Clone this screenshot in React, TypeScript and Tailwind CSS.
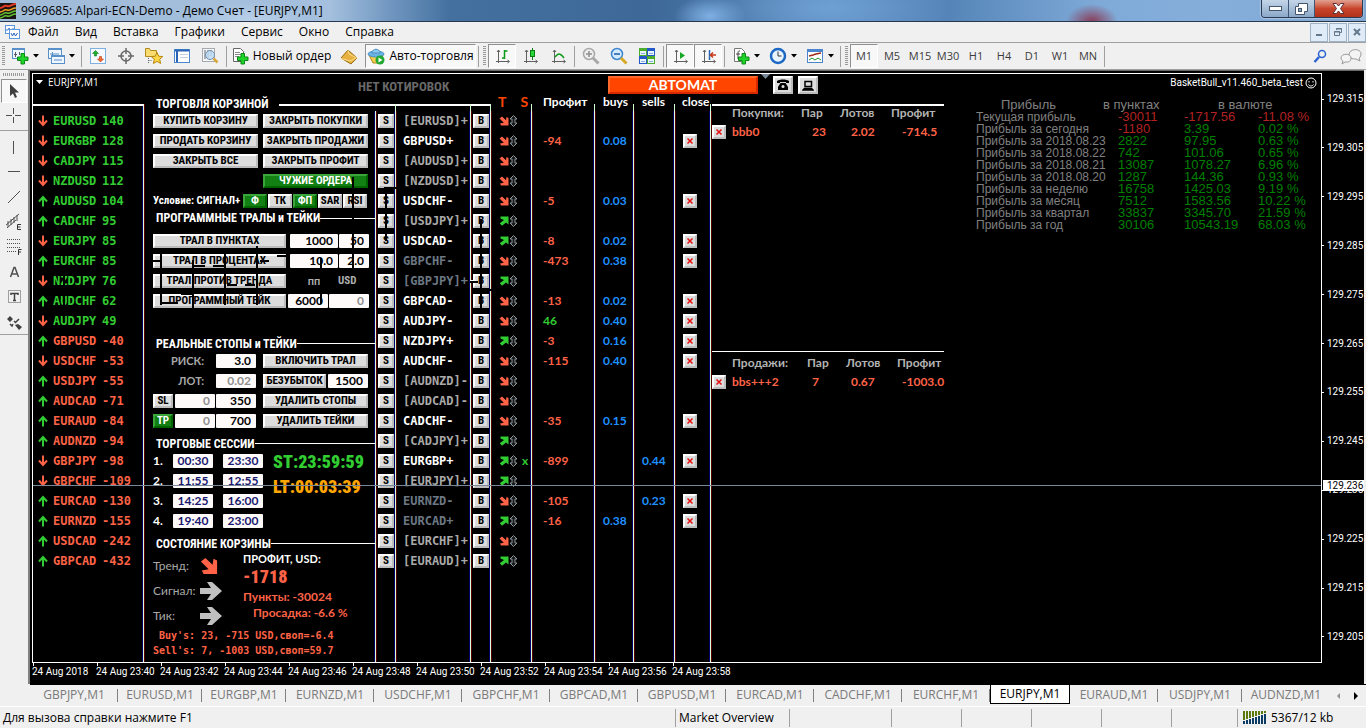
import React from "react";
import clsx from "clsx";

const UI = "font-['Open_Sans','Noto_Sans',sans-serif]";
const AXIS = "font-['Roboto','Open_Sans',sans-serif]";
const LABEL = "font-['Lato','Open_Sans',sans-serif]";
const MONO = "font-['DejaVu_Sans_Mono','Liberation_Mono',monospace]";
const NARROW = "font-['Roboto_Condensed','Liberation_Sans_Narrow','DejaVu_Sans_Condensed',sans-serif]";

// 1px light rule with coloured fringes on both sides
const RULE = "border-r border-[#d8ffd8] shadow-[inset_-1px_0_#00006c,1px_0_#5c0000]";

type Strength = { pair: string; value: number; up: boolean };

const strengths: Strength[] = [
  { pair: "EURUSD", value: 140, up: false },
  { pair: "EURGBP", value: 128, up: false },
  { pair: "CADJPY", value: 115, up: false },
  { pair: "NZDUSD", value: 112, up: false },
  { pair: "AUDUSD", value: 104, up: true },
  { pair: "CADCHF", value: 95, up: true },
  { pair: "EURJPY", value: 85, up: false },
  { pair: "EURCHF", value: 85, up: true },
  { pair: "NZDJPY", value: 76, up: false },
  { pair: "AUDCHF", value: 62, up: true },
  { pair: "AUDJPY", value: 49, up: false },
  { pair: "GBPUSD", value: -40, up: true },
  { pair: "USDCHF", value: -53, up: false },
  { pair: "USDJPY", value: -55, up: true },
  { pair: "AUDCAD", value: -71, up: true },
  { pair: "EURAUD", value: -84, up: true },
  { pair: "AUDNZD", value: -94, up: true },
  { pair: "GBPJPY", value: -98, up: false },
  { pair: "GBPCHF", value: -109, up: false },
  { pair: "EURCAD", value: -130, up: true },
  { pair: "EURNZD", value: -155, up: true },
  { pair: "USDCAD", value: -242, up: true },
  { pair: "GBPCAD", value: -432, up: true },
];

type Position = {
  name: string;
  tone?: "open" | "dim";
  up?: boolean;
  profit?: string;
  buys?: string;
  sells?: string;
  mark?: boolean;
};

const positions: Position[] = [
  { name: "[EURUSD]+" },
  { name: "GBPUSD+", tone: "open", profit: "-94", buys: "0.08" },
  { name: "[AUDUSD]+" },
  { name: "[NZDUSD]+" },
  { name: "USDCHF-", tone: "open", profit: "-5", buys: "0.03" },
  { name: "[USDJPY]+", up: true },
  { name: "USDCAD-", tone: "open", up: true, profit: "-8", buys: "0.02" },
  { name: "GBPCHF-", tone: "dim", profit: "-473", buys: "0.38" },
  { name: "[GBPJPY]+", tone: "dim", up: true },
  { name: "GBPCAD-", tone: "open", profit: "-13", buys: "0.02" },
  { name: "AUDJPY-", tone: "open", profit: "46", buys: "0.40" },
  { name: "NZDJPY+", tone: "open", up: true, profit: "-3", buys: "0.16" },
  { name: "AUDCHF-", tone: "open", profit: "-115", buys: "0.40" },
  { name: "[AUDNZD]-" },
  { name: "[AUDCAD]-" },
  { name: "CADCHF-", tone: "open", profit: "-35", buys: "0.15" },
  { name: "[CADJPY]+", up: true },
  { name: "EURGBP+", tone: "open", up: true, profit: "-899", sells: "0.44", mark: true },
  { name: "[EURJPY]+", up: true },
  { name: "EURNZD-", tone: "dim", profit: "-105", sells: "0.23" },
  { name: "EURCAD+", tone: "dim", up: true, profit: "-16", buys: "0.38" },
  { name: "[EURCHF]+" },
  { name: "[EURAUD]+", up: true },
];

const history = [
  ["Текущая прибыль", "-30011", "-1717.56", "-11.08 %"],
  ["Прибыль за сегодня", "-1180", "3.39", "0.02 %"],
  ["Прибыль за 2018.08.23", "2822", "97.95", "0.63 %"],
  ["Прибыль за 2018.08.22", "742", "101.06", "0.65 %"],
  ["Прибыль за 2018.08.21", "13087", "1078.27", "6.96 %"],
  ["Прибыль за 2018.08.20", "1287", "144.36", "0.93 %"],
  ["Прибыль за неделю", "16758", "1425.03", "9.19 %"],
  ["Прибыль за месяц", "7512", "1583.56", "10.22 %"],
  ["Прибыль за квартал", "33837", "3345.70", "21.59 %"],
  ["Прибыль за год", "30106", "10543.19", "68.03 %"],
];

const prices = ["129.315", "129.305", "129.295", "129.285", "129.275", "129.265", "129.255", "129.245", "129.235", "129.225", "129.215", "129.205"];

const times = ["24 Aug 2018", "24 Aug 23:40", "24 Aug 23:42", "24 Aug 23:44", "24 Aug 23:46", "24 Aug 23:48", "24 Aug 23:50", "24 Aug 23:52", "24 Aug 23:54", "24 Aug 23:56", "24 Aug 23:58"];

const tabs = [
  { name: "GBPJPY,M1", width: "w-[88px]" },
  { name: "EURUSD,M1", width: "w-[84px]" },
  { name: "EURGBP,M1", width: "w-[84px]" },
  { name: "EURNZD,M1", width: "w-[88px]" },
  { name: "USDCHF,M1", width: "w-[88px]" },
  { name: "GBPCHF,M1", width: "w-[88px]" },
  { name: "GBPCAD,M1", width: "w-[88px]" },
  { name: "GBPUSD,M1", width: "w-[88px]" },
  { name: "EURCAD,M1", width: "w-[88px]" },
  { name: "CADCHF,M1", width: "w-[88px]" },
  { name: "EURCHF,M1", width: "w-[88px]" },
  { name: "EURJPY,M1", width: "w-[80px]", active: true },
  { name: "EURAUD,M1", width: "w-[88px]" },
  { name: "USDJPY,M1", width: "w-[84px]" },
  { name: "AUDNZD,M1", width: "w-[88px]", last: true },
];

/* ---------- title, menu and toolbar ---------- */

const Icon = ({ children, w = 18, h = 18 }: { children: React.ReactNode; w?: number; h?: number }) => (
  <svg width={w} height={h} viewBox={`0 0 ${w} ${h}`} className="shrink-0" aria-hidden="true">
    {children}
  </svg>
);

const Plus = ({ x, y }: { x: number; y: number }) => (
  <path
    transform={`translate(${x} ${y})`}
    d="M4 .5h3.500v3.500h3.500v3.500h-3.500v3.500h-3.500v-3.500h-3.500v-3.500h3.500z"
    fill="#1fd32b"
    stroke="#0a8a14"
  />
);

const Axes = ({ children }: { children?: React.ReactNode }) => (
  <Icon>
    <path d="M5.500 3v13M3 14.500h13M4 5l1.500-2L7 5M14.500 13l2 1.500-2 1.500" fill="none" stroke="#606060" />
    {children}
  </Icon>
);

const Caret = () => (
  <Icon w={6} h={4}>
    <path d="M0 0h6L3 3.500z" fill="#000" />
  </Icon>
);

const Grip = () => <span className="mx-0.5 h-5 w-[3px] bg-[repeating-linear-gradient(#9a9a9a_0_1px,#efefef_1px_2px)]" />;
const Divider = () => <span className="mx-[2px] h-[21px] w-px bg-[#a0a0a0]" />;

const Tool = ({
  label,
  pressed,
  children,
  className = "w-7",
}: {
  label: string;
  pressed?: boolean;
  children: React.ReactNode;
  className?: string;
}) => (
  <button
    type="button"
    aria-label={label}
    className={clsx(
      "flex h-6 shrink-0 items-center justify-center gap-1 border",
      pressed ? "border-b-white border-l-[#909090] border-r-white border-t-[#909090] bg-[#f8f8f8]" : "border-transparent",
      className
    )}
  >
    {children}
  </button>
);

const TitleBar = () => (
  <header className="flex h-[22px] items-start border-b border-[#27384f] bg-[radial-gradient(60px_18px_at_250px_20px,#b9cfe8,transparent),radial-gradient(36px_20px_at_710px_16px,#7fb0e4,transparent),radial-gradient(120px_40px_at_830px_8px,#6fa0d4,transparent),radial-gradient(26px_18px_at_1092px_22px,#8a3a55,transparent),linear-gradient(90deg,#9fbbd8_0,#a4c0de_330px,#7197c0_390px,#44709f_450px,#3d6898_650px,#5a89bb_830px,#5585b8_950px,#7faad8_1100px,#86aedb_1220px,#7fa6d0_100%)]">
    <Icon w={16} h={21}>
      <rect y="3" width="16" height="16" fill="#1a1414" />
      <path d="M0 8c4 0 3-3 7-2s4-2 9-2" fill="none" stroke="#e03a22" strokeWidth="2" />
      <path d="M0 12c4 0 3-3 7-2s4-2 9-2" fill="none" stroke="#f0a020" strokeWidth="1.500" />
      <path d="M0 15c4 0 3-3 7-2s4-2 9-2M0 18c4 0 3-3 7-2s4-2 9-2" fill="none" stroke="#5fc030" strokeWidth="1.500" />
    </Icon>
    <h1 className="pl-[5px] text-xs leading-[22px] text-black">9969685: Alpari-ECN-Demo - Демо Счет - [EURJPY,M1]</h1>
    <div className="ml-auto mr-[3px] flex h-[18px] overflow-hidden rounded-b border border-t-0 border-[#2a3c55] shadow-[0_0_2px_#fff]">
      <button type="button" aria-label="Свернуть" className="flex w-[27px] items-center justify-center border-r border-[#3f5878] bg-linear-to-b from-[#c4d5e8] to-[#8ba8c8]">
        <Icon w={13} h={6}>
          <rect x=".5" y=".5" width="12" height="4" fill="#fff" stroke="#44546a" />
        </Icon>
      </button>
      <button type="button" aria-label="Восстановить" className="flex w-[26px] items-center justify-center border-r border-[#3f5878] bg-linear-to-b from-[#c4d5e8] to-[#8ba8c8]">
        <Icon w={13} h={12}>
          <path d="M3.500.5h9v8h-3v3h-9v-8h3z" fill="#fff" stroke="#44546a" />
          <rect x="3.500" y="5.500" width="3" height="3" fill="#8ba8c8" stroke="#44546a" />
        </Icon>
      </button>
      <button type="button" aria-label="Закрыть" className="flex w-[47px] items-center justify-center bg-linear-to-b from-[#e0a090] via-[#c8452c] to-[#b03018]">
        <Icon w={13} h={11}>
          <path d="M1 .5h3.500l2 2.500 2-2.500H12L8.500 5.500 12 10.500H8.500l-2-2.500-2 2.500H1l3.500-5z" fill="#fff" stroke="#5a3038" />
        </Icon>
      </button>
    </div>
  </header>
);

const MenuBar = () => (
  <nav className="flex h-[21px] items-center border-b border-[#a0a0a0] pl-[5px]">
    <Icon w={15} h={15}>
      <rect x=".5" y=".5" width="9" height="8" fill="#fff" stroke="#5a96dc" />
      <path d="M1 5h2l1-2 2 3 1-2h2" fill="none" stroke="#3a7ad0" />
      <rect x="4.500" y="4.500" width="10" height="9" fill="#fff" stroke="#5a96dc" />
      <path d="M6 8l1.500 3L9 8l1.500 3 2-3" fill="none" stroke="#2a62c0" />
    </Icon>
    <ul className="flex gap-4 pl-2 text-xs">
      {["Файл", "Вид", "Вставка", "Графики", "Сервис", "Окно", "Справка"].map((item) => (
        <li key={item}>
          <button type="button">{item}</button>
        </li>
      ))}
    </ul>
    <div className="ml-auto flex gap-px">
      <button type="button" aria-label="Свернуть график" className="flex h-[19px] w-[18px] items-center justify-center border border-[#9fb4c8] bg-[#dfebf7]">
        <Icon w={10} h={10}>
          <path d="M2 8h6" stroke="#64788c" strokeWidth="2" />
        </Icon>
      </button>
      <button type="button" aria-label="Восстановить график" className="flex h-[19px] w-[18px] items-center justify-center border border-[#9fb4c8] bg-[#dfebf7]">
        <Icon w={10} h={10}>
          <path d="M3.500 3V1.500h5v4H7M1.500 4.500h5v4h-5zM1 5h6M3 2h6" fill="none" stroke="#64788c" />
        </Icon>
      </button>
      <button type="button" aria-label="Закрыть график" className="flex h-[19px] w-[18px] items-center justify-center border border-[#9fb4c8] bg-[#dfebf7]">
        <Icon w={10} h={10}>
          <path d="M2 2l6 6M8 2L2 8" stroke="#64788c" strokeWidth="2" />
        </Icon>
      </button>
    </div>
  </nav>
);

const Toolbar = () => (
  <div className="flex h-[27px] items-center border-b border-[#a0a0a0] text-xs">
    <Grip />
    <Tool label="Новый график" className="w-9">
      <Icon>
        <rect x="1.500" y="1.500" width="12" height="10" fill="#eef6ff" stroke="#5a90c8" />
        <path d="M2 2.500h11" stroke="#5a90c8" />
        <path d="M4.500 5v5M3 7.500h3M8.500 5v3" stroke="#556" />
        <Plus x={6} y={6} />
      </Icon>
      <Caret />
    </Tool>
    <Tool label="Профили" className="w-9">
      <Icon>
        <rect x="1.500" y="1.500" width="13" height="10" fill="#eef6ff" stroke="#5a90c8" />
        <path d="M2 2.500h12M3 7h9M5.500 5v5" stroke="#5a90c8" />
        <rect x="4.500" y="8.500" width="13" height="8" fill="#eef6ff" stroke="#5a90c8" />
        <path d="M5 9.500h12M7 13h8" stroke="#5a90c8" />
      </Icon>
      <Caret />
    </Tool>
    <Divider />
    <Tool label="Обзор рынка">
      <Icon>
        <rect x="1.500" y="1.500" width="15" height="15" fill="#f6faff" stroke="#7eb0e0" />
        <path d="M6.500 3.500l3 3h-2v2.500h-2V6.500h-2z" fill="#20b030" stroke="#0a7a14" strokeWidth=".6" />
        <path d="M11.500 15l3-3h-2V9.500h-2V12h-2z" fill="#f07030" stroke="#c03010" strokeWidth=".6" />
      </Icon>
    </Tool>
    <Tool label="Окно данных">
      <Icon>
        <circle cx="9" cy="9" r="5" fill="none" stroke="#686868" strokeWidth="1.500" />
        <path d="M9 1v6M9 11v6M1 9h6M11 9h6" stroke="#686868" strokeWidth="1.500" />
      </Icon>
    </Tool>
    <Tool label="Навигатор">
      <Icon>
        <path d="M.5 1.500h4l1 2h6v6H.5z" fill="#f8dc70" stroke="#b08a20" />
        <path d="M3.500 11v6M3.500 13.500h3" stroke="#666" strokeDasharray="1 1" />
        <path d="M12 5.500l1.700 3.700 4 .4-3 2.700.9 4.200L12 14.400l-3.600 2.100.9-4.200-3-2.700 4-.4z" fill="#fcd848" stroke="#b8860b" />
      </Icon>
    </Tool>
    <Tool label="Терминал">
      <Icon>
        <rect x="1.500" y="2.500" width="15" height="13" fill="#fff" stroke="#4a86d0" />
        <path d="M2 3.500h14M4 3v12" stroke="#2a64b4" strokeWidth="2" />
        <path d="M7 7.500h8M7 10.500h8" stroke="#c4d0de" />
      </Icon>
    </Tool>
    <Tool label="Тестер стратегий">
      <Icon>
        <rect x="1.500" y="1.500" width="12" height="13" fill="#f6f6f6" stroke="#a4aab2" />
        <path d="M4 3v9M7 3v8M10 3v6" stroke="#667" />
        <circle cx="9" cy="8" r="4.500" fill="#bcdcf8" fillOpacity=".8" stroke="#7090b0" />
        <path d="M12.500 11.500l4 4" stroke="#d8a838" strokeWidth="2.500" />
      </Icon>
    </Tool>
    <Divider />
    <Tool label="Новый ордер" className="w-[104px]">
      <Icon>
        <path d="M2.500 1.500h7l3 3v10h-10z" fill="#fff" stroke="#666" />
        <path d="M4 5.500h5M4 7.500h6M4 9.500h4" stroke="#888" />
        <Plus x={6} y={6} />
      </Icon>
      Новый ордер
    </Tool>
    <Tool label="MetaEditor" className="w-8">
      <Icon>
        <path d="M1 11l7-8 9 8-6 6z" fill="#e8b040" stroke="#9a6a10" />
        <path d="M8 3l1 4 8 4M1 11.500l9 2.500 6-3" fill="none" stroke="#fbe08a" />
      </Icon>
    </Tool>
    <Tool label="Авто-торговля" pressed className="w-[111px]">
      <Icon>
        <path d="M2 8l4 8h7l3-8z" fill="#f4cc4c" stroke="#b08820" />
        <ellipse cx="9" cy="7" rx="8" ry="3" fill="#68b4e4" stroke="#4a90c0" />
        <path d="M5 6c0-5 8-5 8 0z" fill="#8ccaf0" stroke="#4a90c0" />
        <circle cx="13" cy="13" r="4.500" fill="#20a830" />
        <path d="M11.500 10.500l4 2.500-4 2.500z" fill="#fff" />
      </Icon>
      Авто-торговля
    </Tool>
    <Divider />
    <Grip />
    <Tool label="Бары" pressed>
      <Axes>
        <path d="M11.500 3v9M11.500 4h3M9 11h3" stroke="#0a9a18" strokeWidth="1.500" />
      </Axes>
    </Tool>
    <Tool label="Свечи">
      <Axes>
        <path d="M11.500 1v12" stroke="#0a7a14" />
        <rect x="9.500" y="3.500" width="4" height="6" fill="#2ad83a" stroke="#0a7a14" />
      </Axes>
    </Tool>
    <Tool label="Линия">
      <Axes>
        <path d="M6 10c3-3 4-5 9 1" fill="none" stroke="#0a9a18" strokeWidth="1.500" />
      </Axes>
    </Tool>
    <Divider />
    <Tool label="Увеличить">
      <Icon>
        <circle cx="7" cy="7" r="5.500" fill="#eee" stroke="#a8a8a8" strokeWidth="1.500" />
        <path d="M4 7h6M7 4v6" stroke="#909090" strokeWidth="1.500" />
        <path d="M11 11l5.500 5.500" stroke="#a8a8a8" strokeWidth="3" />
      </Icon>
    </Tool>
    <Tool label="Уменьшить">
      <Icon>
        <circle cx="7" cy="7" r="5.500" fill="#d4ebff" stroke="#3c84cc" strokeWidth="1.500" />
        <path d="M4 7h6" stroke="#1c5ca8" strokeWidth="1.500" />
        <path d="M11 11l5.500 5.500" stroke="#d8a828" strokeWidth="3" />
      </Icon>
    </Tool>
    <Tool label="Расположить окна">
      <Icon>
        <path d="M1 1h8v8H1zM9 9h8v8H9z" fill="#4cac2c" />
        <path d="M9 1h8v8H9zM1 9h8v8H1z" fill="#2458c8" />
        <path d="M2 4h6v4H2zM10 4h6v4h-6zM2 12h6v4H2zM10 12h6v4h-6z" fill="#eaf4ff" />
        <path d="M3 6.500h4M11 6.500h4M3 14.500h4M11 14.500h4" stroke="#8ab4e0" />
      </Icon>
    </Tool>
    <Divider />
    <Tool label="Автопрокрутка" pressed>
      <Axes>
        <path d="M9 5l5 3.500L9 12z" fill="#18a828" />
      </Axes>
    </Tool>
    <Tool label="Сдвиг графика" pressed>
      <Axes>
        <path d="M10.500 3v10" stroke="#2a68b8" strokeWidth="1.500" />
        <path d="M17 8h-5M14 5.500L11.500 8l2.500 2.500" fill="none" stroke="#c83818" strokeWidth="1.500" />
      </Axes>
    </Tool>
    <Divider />
    <Tool label="Индикаторы" className="w-[37px]">
      <Icon>
        <path d="M2.500 1.500h7l3 3v10h-10z" fill="#fff" stroke="#777" />
        <path d="M8 4c-2-.5-2 1-2 3v5M4 7h4" fill="none" stroke="#444" />
        <Plus x={6} y={6} />
      </Icon>
      <Caret />
    </Tool>
    <Tool label="Периоды" className="w-[37px]">
      <Icon>
        <circle cx="9" cy="9" r="7" fill="#eaf4ff" stroke="#1c68c4" strokeWidth="2.500" />
        <path d="M9 4.500V9h3.500" fill="none" stroke="#333" />
      </Icon>
      <Caret />
    </Tool>
    <Tool label="Шаблоны" className="w-[37px]">
      <Icon>
        <rect x="1.500" y="2.500" width="15" height="13" fill="#fff" stroke="#4a86d0" />
        <path d="M2 4h14" stroke="#4a86d0" strokeWidth="2" />
        <path d="M3 9l4-1 3-1 5-1" fill="none" stroke="#a02818" strokeWidth="1.500" />
        <path d="M3 13l3-2 3 2 3-2 3 2" fill="none" stroke="#209030" />
      </Icon>
      <Caret />
    </Tool>
    <Divider />
    <Grip />
    <div className="flex text-[11px] text-[#3c3c3c]">
      {["M1", "M5", "M15", "M30", "H1", "H4", "D1", "W1", "MN"].map((frame) => (
        <Tool key={frame} label={frame} pressed={frame === "M1"}>
          {frame}
        </Tool>
      ))}
    </div>
    <Divider />
    <div className="ml-auto flex items-center gap-3 pr-1">
      <button type="button" aria-label="Поиск">
        <Icon w={15} h={15}>
          <circle cx="9" cy="5" r="3.500" fill="none" stroke="#2a62d0" strokeWidth="1.500" />
          <path d="M6 8l-4.500 5" stroke="#2a62d0" strokeWidth="2.500" />
        </Icon>
      </button>
      <button type="button" aria-label="Чат">
        <Icon w={22} h={17}>
          <path d="M9 7c0-7 12-7 12-1 0 3-2 4-2 4l1 3-4-2c-4 0-7-1-7-4z" fill="#f4f4f4" stroke="#9a9a9a" />
          <path d="M1 10c0-5 10-5 10 0s-5 4-6 4l-3 2 1-3s-2-1-2-3z" fill="#f4f4f4" stroke="#9a9a9a" />
        </Icon>
      </button>
    </div>
  </div>
);

const drawingTools = [
  { label: "Вертикальная линия", icon: <path d="M8.500 3v13" stroke="#505050" /> },
  { label: "Горизонтальная линия", icon: <path d="M3 8.500h12" stroke="#505050" /> },
  { label: "Трендовая линия", icon: <path d="M3 15L15 3" stroke="#505050" /> },
  {
    label: "Канал",
    icon: (
      <>
        <path d="M1 12L14 1M2 15l9-8M3 8v6M6 6v6M9 4v6M12 2v6" stroke="#505050" />
        <path d="M16 11.500h-3.500v5H16M12.500 14H15.500" fill="none" stroke="#333" />
      </>
    ),
  },
  {
    label: "Фибоначчи",
    icon: (
      <>
        <path d="M2 1.500h14M2 5.500h14M2 9.500h14M2 13.500h9" stroke="#505050" strokeDasharray="1 1" />
        <path d="M16.500 11.500H13.500V17M13.500 14H16" fill="none" stroke="#333" />
      </>
    ),
  },
  {
    label: "Текст",
    icon: <path d="M5.500 14L9 4.500h1L13.500 14M6.500 11h6" fill="none" stroke="#505050" strokeWidth="1.500" />,
  },
  {
    label: "Метка",
    icon: (
      <>
        <rect x="3.500" y="2.500" width="12" height="12" fill="none" stroke="#505050" strokeDasharray="1 1" />
        <path d="M6 7V5.500h7V7M9.500 6v7M8 12.500h3" fill="none" stroke="#404040" strokeWidth="1.500" />
      </>
    ),
  },
  {
    label: "Стрелки",
    icon: (
      <>
        <path d="M2 6l3-3 3 3-3 3zM10 12l3-1 4 3-3 3z" fill="#404040" />
        <path d="M5 11l2 2 1-2M9 8l1.500 1.500L14 6" fill="none" stroke="#404040" strokeWidth="1.500" />
      </>
    ),
  },
];

const DrawingBar = () => (
  <aside className="w-7 shrink-0">
    <div className="flex flex-col border-b border-[#a0a0a0] pt-[3px]">
      <span className="mx-[3px] mb-[3px] h-[3px] bg-[repeating-linear-gradient(90deg,#9a9a9a_0_1px,#efefef_1px_2px)]" />
      <Tool label="Курсор" pressed className="mx-px">
        <Icon>
          <path d="M5 2v12l3-2.500 2 4.500 2-1-2-4.500h4z" fill="#404040" />
        </Icon>
      </Tool>
      <Tool label="Перекрестие">
        <Icon>
          <path d="M8.500 2v6M8.500 11v6M1 9.500h6M10 9.500h6" stroke="#505050" />
        </Icon>
      </Tool>
      <span className="my-[3px] h-px bg-[#a0a0a0]" />
      {drawingTools.map((tool) => (
        <button key={tool.label} type="button" aria-label={tool.label} className="flex h-[25px] items-center justify-center">
          <Icon>{tool.icon}</Icon>
        </button>
      ))}
    </div>
  </aside>
);

/* ---------- chart panel parts ---------- */

const Push = ({
  children,
  className,
  on,
  label,
}: {
  children: React.ReactNode;
  className?: string;
  on?: boolean;
  label?: string;
}) => (
  <button
    type="button"
    aria-label={label}
    className={clsx(
      "flex h-[14px] shrink-0 items-center justify-center whitespace-nowrap border-2 text-[11px] font-bold leading-[10px]",
      NARROW,
      on
        ? "border-b-[#006400] border-l-[#3aa53a] border-r-[#006400] border-t-[#3aa53a] bg-[#128012] text-white"
        : "border-b-[#bcbcbc] border-l-white border-r-[#bcbcbc] border-t-white bg-[#dcdcdc] text-black",
      className
    )}
  >
    {children}
  </button>
);

const Field = ({
  label,
  value,
  className = "w-10",
  muted,
  time,
}: {
  label: string;
  value: string;
  className?: string;
  muted?: boolean;
  time?: boolean;
}) => (
  <input
    aria-label={label}
    defaultValue={value}
    className={clsx(
      "h-[14px] shrink-0 rounded-[1px] bg-[#fffafa] text-xs font-bold leading-[14px]",
      time ? "text-center text-[#191970]" : "pr-[5px] text-right",
      !time && (muted ? "text-[#909090]" : "text-black"),
      className
    )}
  />
);

const Row = ({ children, className }: { children: React.ReactNode; className?: string }) => (
  <div className={clsx("flex h-5 items-center", className)}>{children}</div>
);

const Heading = ({ children, className = "items-end" }: { children: React.ReactNode; className?: string }) => (
  <div className={clsx("flex h-5 pl-[3px]", className)}>
    <h2 className={clsx("whitespace-nowrap text-xs font-bold leading-[14px] text-white", NARROW)}>{children}</h2>
    <span className="mb-[7px] mt-[7px] h-px flex-1 bg-white" />
  </div>
);

const PairArrow = ({ up }: { up: boolean }) => (
  <Icon w={10} h={12}>
    <path
      d={up ? "M5 11.500V2M1 6.500L5 2l4 4.500" : "M5 .5V10M1 5.500L5 10l4-4.500"}
      fill="none"
      stroke={up ? "#32cd32" : "#ff6347"}
      strokeWidth="2"
    />
  </Icon>
);

const TrendArrow = ({ up, size = 10 }: { up?: boolean; size?: number }) => (
  <svg width={size} height={size} viewBox="0 0 10 10" aria-hidden="true">
    <path
      d={up ? "M1.500.5h8v8L7 6.500 3 9.700.8 7.200 5 4 1.500 2.500z" : "M.5 2.500L3 .5l4 3.800L7.500 1 9.500 2v7.500H2L1 7.500 4.800 6.800z"}
      fill={up ? "#32cd32" : "#ff6347"}
    />
  </svg>
);

const UpDown = () => (
  <Icon w={9} h={12}>
    <path d="M4.500.5L8 4H6v4h2l-3.500 3.500L1 8h2V4H1z" fill="#1a1a1a" stroke="#8c989c" />
  </Icon>
);

const GreyArrow = () => (
  <Icon w={22} h={18}>
    <path d="M0 6h11L7 0h5l10 9-10 9H7l4-6H0z" fill="#c0c0c0" />
  </Icon>
);

const StrengthList = () => (
  <section className={clsx("w-[111px] shrink-0 pt-[9px]", MONO)}>
    <ul className={clsx("h-full border-t-2 border-t-white pt-[5px] text-xs font-bold", RULE)}>
      {strengths.map(({ pair, value, up }) => (
        <li key={pair} className={clsx("flex h-5 items-center pl-[5px]", value > 0 ? "text-[#32cd32]" : "text-[#ff6347]")}>
          <PairArrow up={up} />
          <span className="w-[54px] pl-[5px]">{pair}</span>
          <span>{value}</span>
        </li>
      ))}
    </ul>
  </section>
);

const conditions = ["Ф", "ТК", "ФП", "SAR", "RSI"];

const sessions = [
  ["00:30", "23:30"],
  ["11:55", "12:55"],
  ["14:25", "16:00"],
  ["19:40", "23:00"],
];

const ControlPanel = () => (
  <section className={clsx("flex w-[232px] shrink-0 flex-col", LABEL)}>
    <div className="flex h-4 items-center gap-2.5 pl-3">
      <h2 className={clsx("whitespace-nowrap pt-0.5 text-xs font-bold text-white", NARROW)}>ТОРГОВЛЯ КОРЗИНОЙ</h2>
      <span className="mt-[3px] h-[2px] flex-1 bg-white" />
    </div>
    <div className={clsx("flex-1 pl-[9px]", RULE)}>
      <Row className="gap-[5px]">
        <Push className="w-[105px]">КУПИТЬ КОРЗИНУ</Push>
        <Push className="w-[105px]">ЗАКРЫТЬ ПОКУПКИ</Push>
      </Row>
      <Row className="gap-[5px]">
        <Push className="w-[105px]">ПРОДАТЬ КОРЗИНУ</Push>
        <Push className="w-[105px]">ЗАКРЫТЬ ПРОДАЖИ</Push>
      </Row>
      <Row className="gap-[5px]">
        <Push className="w-[105px]">ЗАКРЫТЬ ВСЕ</Push>
        <Push className="w-[105px]">ЗАКРЫТЬ ПРОФИТ</Push>
      </Row>
      <Row className="pl-[110px]">
        <Push on className="w-[105px]">ЧУЖИЕ ОРДЕРА</Push>
      </Row>
      <Row className="gap-px">
        <span className={clsx("w-[89px] whitespace-nowrap text-[11px] font-bold text-white", NARROW)}>Условие: СИГНАЛ+</span>
        {conditions.map((item) => (
          <Push key={item} on={item.startsWith("Ф")} className="w-6">
            {item}
          </Push>
        ))}
      </Row>
      <Heading className="items-start">ПРОГРАММНЫЕ ТРАЛЫ и ТЕЙКИ</Heading>
      <Row>
        <Push className="mr-1 w-[133px]">ТРАЛ В ПУНКТАХ</Push>
        <Field label="Трал, пункты" value="1000" className="mr-px w-12" />
        <Field label="Шаг, пункты" value="50" className="w-[30px]" />
      </Row>
      <Row>
        <Push className="mr-1 w-[133px]">ТРАЛ В ПРОЦЕНТАХ</Push>
        <Field label="Трал, проценты" value="10.0" className="mr-px w-12" />
        <Field label="Шаг, проценты" value="2.0" className="w-[30px]" />
      </Row>
      <Row className="text-[11px] font-bold text-[#b0b0b0]">
        <Push className="w-[133px]">ТРАЛ ПРОТИВ ТРЕНДА</Push>
        <span className="w-[52px] pl-1 text-center">пп</span>
        <span className={NARROW}>USD</span>
      </Row>
      <Row>
        <Push className="mr-0.5 w-[133px]">ПРОГРАММНЫЙ ТЕЙК</Push>
        <Field label="Тейк, пункты" value="6000" className="mr-px w-10" />
        <Field label="Тейк, USD" value="0" muted />
      </Row>
      <Row>{null}</Row>
      <Heading>РЕАЛЬНЫЕ СТОПЫ и ТЕЙКИ</Heading>
      <Row>
        <span className="w-[63px] pr-3 text-right text-[11px] font-bold text-[#a9a9a9]">РИСК:</span>
        <Field label="Риск" value="3.0" className="mr-[7px] w-10" />
        <Push className="w-[105px]">ВКЛЮЧИТЬ ТРАЛ</Push>
      </Row>
      <Row>
        <span className="w-[63px] pr-3 text-right text-[11px] font-bold text-[#a9a9a9]">ЛОТ:</span>
        <Field label="Лот" value="0.02" muted className="mr-[7px] w-10" />
        <Push className="mr-0.5 w-[63px]">БЕЗУБЫТОК</Push>
        <Field label="Безубыток" value="1500" />
      </Row>
      <Row>
        <Push className="mr-0.5 w-5">SL</Push>
        <Field label="SL" value="0" muted className="mr-px w-10" />
        <Field label="SL, пункты" value="350" className="mr-[7px] w-10" />
        <Push className="w-[105px]">УДАЛИТЬ СТОПЫ</Push>
      </Row>
      <Row>
        <Push on className="mr-0.5 w-5">TP</Push>
        <Field label="TP" value="0" muted className="mr-px w-10" />
        <Field label="TP, пункты" value="700" className="mr-[7px] w-10" />
        <Push className="w-[105px]">УДАЛИТЬ ТЕЙКИ</Push>
      </Row>
      <Heading>ТОРГОВЫЕ СЕССИИ</Heading>
      <div className="flex">
        <ol className="w-[120px]">
          {sessions.map(([from, to], i) => (
            <li key={from} className="flex h-5 items-center text-xs font-bold text-white">
              <span className="w-5">{i + 1}.</span>
              <Field time label={`Сессия ${i + 1}, начало`} value={from} className="mr-2.5 w-10" />
              <Field time label={`Сессия ${i + 1}, конец`} value={to} />
            </li>
          ))}
        </ol>
        <div className={clsx("flex flex-col gap-[3px] text-[18px] font-black leading-[22px]", NARROW)}>
          <time className="text-[#32cd32]">ST:23:59:59</time>
          <time className="text-[#ffa500]">LT:00:03:39</time>
        </div>
      </div>
      <Heading>СОСТОЯНИЕ КОРЗИНЫ</Heading>
      <div className="flex pt-0.5">
        <dl className="w-[90px] text-xs text-[#a9a9a9]">
          <div className="flex h-[25px] items-center">
            <dt className="w-[47px]">Тренд:</dt>
            <dd>
              <TrendArrow size={18} />
            </dd>
          </div>
          <div className="flex h-[25px] items-center">
            <dt className="w-[47px]">Сигнал:</dt>
            <dd>
              <GreyArrow />
            </dd>
          </div>
          <div className="flex h-[25px] items-center">
            <dt className="w-[47px]">Тик:</dt>
            <dd>
              <GreyArrow />
            </dd>
          </div>
        </dl>
        <div className="text-xs font-bold text-[#ff6347]">
          <p className="text-[11px] leading-3 text-white">ПРОФИТ, USD:</p>
          <p className={clsx("text-[18px] font-black leading-6", NARROW)}>-1718</p>
          <p className="leading-4">Пункты: -30024</p>
          <p className="pl-2.5 leading-4">Просадка: -6.6 %</p>
        </div>
      </div>
      <div className={clsx("whitespace-pre text-[10px] font-bold leading-[15px] text-[#ff6347]", MONO)}>
        <p>{" Buy's: 23, -715 USD,своп=-6.4"}</p>
        <p>{"Sell's: 7, -1003 USD,своп=59.7"}</p>
      </div>
    </div>
  </section>
);

const Head = ({ children, className, topLine }: { children?: React.ReactNode; className?: string; topLine?: boolean }) => (
  <th
    className={clsx(
      "relative h-4 p-0 text-left text-xs font-bold leading-[14px] text-white",
      "after:absolute after:bottom-0 after:right-0 after:h-[7px] after:w-px after:bg-[#d8ffd8]",
      topLine && "before:absolute before:inset-x-0 before:top-[9px] before:h-[2px] before:bg-white",
      className
    )}
  >
    {children}
  </th>
);

const CloseX = () => (
  <Push label="Закрыть" className="w-[14px]">
    <Icon w={8} h={8}>
      <path d="M1.500 1.500l5 5M6.500 1.500l-5 5" stroke="#e81010" strokeWidth="1.500" />
    </Icon>
  </Push>
);

const PositionTable = () => (
  <table className={clsx("h-full w-[335px] shrink-0 table-fixed border-separate border-spacing-0", LABEL)}>
    <thead>
      <tr className="align-top">
        <Head topLine className="w-5" />
        <Head topLine className="w-[75px]" />
        <Head topLine className="w-5" />
        <Head className="w-[41px] pl-[7px]">
          <span className="flex gap-3.5 text-[14px] text-[#ff4500]">
            <span>T</span>
            <span>S</span>
          </span>
        </Head>
        <Head className="w-[63px] pl-[11px]">Профит</Head>
        <Head className="w-[39px] pl-2">buys</Head>
        <Head className="w-[41px] pl-2">sells</Head>
        <Head className="w-9 pl-[7px]">close</Head>
      </tr>
    </thead>
    <tbody className="text-xs font-bold">
      {positions.map((p) => (
        <tr key={p.name} className="h-5">
          <td className={clsx("p-0 pl-0.5", RULE)}>
            <Push label={`Продать ${p.name}`} className="w-4">S</Push>
          </td>
          <td
            className={clsx(
              "p-0 pl-[7px]",
              MONO,
              RULE,
              p.tone === "open" ? "text-white" : p.tone === "dim" ? "text-[#6c7884]" : "text-[#a9a9a9]"
            )}
          >
            {p.name}
          </td>
          <td className={clsx("p-0 pl-0.5", RULE)}>
            <Push label={`Купить ${p.name}`} className="w-4">B</Push>
          </td>
          <td className={clsx("p-0 pl-2", RULE)}>
            <span className="flex items-center">
              <TrendArrow up={p.up} />
              <UpDown />
              {p.mark && <span className="pl-1 text-xs leading-3 text-[#32cd32]">x</span>}
            </span>
          </td>
          <td className={clsx("p-0 pl-[11px]", RULE, p.profit?.startsWith("-") ? "text-[#ff6347]" : "text-[#32cd32]")}>
            {p.profit}
          </td>
          <td className={clsx("p-0 pl-2 text-[#1e90ff]", RULE)}>{p.buys}</td>
          <td className={clsx("p-0 pl-2 text-[#1e90ff]", RULE)}>{p.sells}</td>
          <td className={clsx("p-0 pl-2", RULE)}>{p.profit && <CloseX />}</td>
        </tr>
      ))}
      <tr>
        {Array.from({ length: 8 }, (_, i) => (
          <td key={i} className={clsx("p-0", RULE)} />
        ))}
      </tr>
    </tbody>
  </table>
);

const BasketTable = ({
  title,
  row,
  headPad,
  className,
}: {
  title: string;
  row: string[];
  headPad?: string;
  className?: string;
}) => (
  <table className={clsx("w-[232px] table-fixed border-separate border-spacing-0 border-t-white text-left text-xs font-bold", className)}>
    <thead className="leading-[14px] text-[#b4b4b4]">
      <tr>
        <th className="w-5 p-0" />
        <th className="w-[69px] p-0">{title}</th>
        <th className={clsx("w-[39px] p-0", headPad)}>Пар</th>
        <th className={clsx("w-[51px] p-0", headPad)}>Лотов</th>
        <th className={clsx("p-0", headPad)}>Профит</th>
      </tr>
    </thead>
    <tbody className="text-[#ff6347]">
      <tr className="h-6">
        <td className="p-0">
          <CloseX />
        </td>
        <td className="p-0">{row[0]}</td>
        <td className="p-0 pl-[11px]">{row[1]}</td>
        <td className="p-0 pl-[11px]">{row[2]}</td>
        <td className="p-0 pl-[11px]">{row[3]}</td>
      </tr>
    </tbody>
  </table>
);

const HistoryTable = () => (
  <table className="mr-2.5 mt-1 w-[335px] table-fixed border-separate border-spacing-0 self-start font-['Liberation_Sans',sans-serif] text-[13px] leading-3 text-[#808080]">
    <thead>
      <tr className="text-left">
        <th className="w-[127px] p-0 pl-[25px] font-normal">Прибыль</th>
        <th className="w-[81px] p-0 font-normal">в пунктах</th>
        <th className="w-[74px] p-0 pl-[34px] font-normal">
          <span className="whitespace-nowrap">в валюте</span>
        </th>
        <th className="p-0" />
      </tr>
    </thead>
    <tbody>
      {history.map(([name, ...values]) => (
        <tr key={name}>
          <td className="whitespace-nowrap p-0 text-xs leading-3">{name}</td>
          {values.map((value, i) => (
            <td
              key={i}
              className={clsx(
                "whitespace-nowrap p-0",
                i === 0 && "pl-[15px]",
                value.startsWith("-") ? "text-[#b22222]" : "text-[#008000]"
              )}
            >
              {value}
            </td>
          ))}
        </tr>
      ))}
    </tbody>
  </table>
);

// OHLC bars are painted in the background colour, so they only show where they cross the panel
const PriceBars = () => (
  <svg width="480" height="240" viewBox="33 74 480 240" className="pointer-events-none absolute left-0 top-0" aria-hidden="true">
    <path
      d="M353 177v92M386 187v54M161 253v52M193 260v48M225 253v52M257 246v59M321 258v46M481 220v88M64 276v50"
      stroke="#000"
      strokeWidth="2"
    />
    <path
      d="M153 261h8M277 256h9M193 266h12M213 266h11M260 261h9M227 285h10M245 285h10M181 294h12M162 303h16M384 188h13M470 282h8M489 290h4"
      stroke="#000"
      strokeWidth="2"
    />
    <path d="M378 214.500h6M470 280.500h6" stroke="#fff" />
  </svg>
);

const Chart = () => (
  <main className="flex min-w-0 flex-1 flex-col border-l-2 border-t border-l-[#808080] border-t-[#696969] bg-black pl-0.5 pt-0.5">
    <div className="flex flex-1">
      <div className="relative flex min-w-0 flex-1 flex-col border border-white">
        <div className={clsx("flex h-[21px] items-start", UI)}>
          <div className="flex w-[325px] items-center gap-[5px] pl-[3px] pt-px text-[10px] leading-[14px] text-white">
            <Icon w={7} h={4}>
              <path d="M0 0h7L3.500 4z" fill="#fff" />
            </Icon>
            EURJPY,M1
          </div>
          <p className={clsx("w-[250px] pt-[5px] text-[13px] font-bold leading-4 text-[#696969]", NARROW)}>НЕТ КОТИРОВОК</p>
          <button
            type="button"
            className={clsx(
              "mt-0.5 h-[18px] w-[150px] border-2 border-b-[#d82800] border-l-[#ff6a2a] border-r-[#d82800] border-t-[#ff6a2a] bg-[#ff4500] text-[14px] font-bold leading-[14px] text-white",
              LABEL
            )}
          >
            АВТОМАТ
          </button>
          <span className="flex w-[15px] justify-center">
            <Icon w={9} h={5}>
              <path d="M0 0h9L4.500 5z" fill="#778899" />
            </Icon>
          </span>
          <div className="flex gap-[5px] pt-0.5">
            <Push label="Телефон" className="h-[18px] w-5">
              <Icon w={14} h={12}>
                <path d="M1 4V2c3-2 9-2 12 0v2h-3V3H4v1zM4.500 4h5l2.500 4v3H2V8z" fill="#000" />
                <circle cx="7" cy="7.500" r="1.500" fill="#dcdcdc" />
              </Icon>
            </Push>
            <Push label="Компьютер" className="h-[18px] w-5">
              <Icon w={12} h={11}>
                <path d="M3 1.500h6.500v5H3zM2.500 8.500h7l1.500 1.500H1z" fill="none" stroke="#000" strokeWidth="1.500" />
              </Icon>
            </Push>
          </div>
          <p className={clsx("ml-auto flex items-center gap-0.5 pr-1 pt-0.5 text-[10px] leading-[14px] text-white", AXIS)}>
            BasketBull_v11.460_beta_test
            <Icon w={12} h={12}>
              <circle cx="6" cy="6" r="5" fill="none" stroke="#fff" />
              <path d="M3.500 7.500c1 2 4 2 5 0M4 4v1.500M8 4v1.500" fill="none" stroke="#fff" />
            </Icon>
          </p>
        </div>
        <div className="flex flex-1">
          <StrengthList />
          <ControlPanel />
          <PositionTable />
          <div className={clsx("flex flex-col pl-px pt-[9px]", LABEL)}>
            <div className="h-[247px]">
              <BasketTable title="Покупки:" row={["bbb0", "23", "2.02", "-714.5"]} className="border-t-2" />
            </div>
            <BasketTable title="Продажи:" row={["bbs+++2", "7", "0.67", "-1003.0"]} headPad="pl-1.5" className="border-t pt-1" />
          </div>
          <div className="flex flex-1 justify-end">
            <HistoryTable />
          </div>
        </div>
        <PriceBars />
        <div className="pointer-events-none absolute inset-x-0 top-[411px] h-px bg-[#778899]" />
      </div>
      <div className={clsx("relative flex w-[42px] shrink-0 flex-col justify-between pb-5 pt-5 text-[10px] leading-[12px] text-white", AXIS)}>
        {prices.map((price) => (
          <span key={price} className="flex items-center gap-[3px]">
            <span className="h-px w-0.5 bg-white" />
            {price}
          </span>
        ))}
        <span className="absolute right-0 top-[407px] w-[41px] bg-white pl-1 leading-[11px] text-black">129.236</span>
      </div>
    </div>
    <div className={clsx("flex h-[21px] text-[10px] leading-[12px] text-white", AXIS)}>
      {times.map((time) => (
        <span key={time} className="w-16 shrink-0 whitespace-nowrap">
          <span className="ml-px block h-[3px] w-px bg-white" />
          {time}
        </span>
      ))}
    </div>
  </main>
);

const TabBar = () => (
  <nav className="ml-[30px] flex h-[22px] border-t border-black text-xs text-[#7a7a7a]">
    {tabs.map((tab) => (
      <a
        key={tab.name}
        href="#"
        className={clsx(
          "relative flex h-[19px] shrink-0 items-center justify-center",
          tab.width,
          tab.active && "border border-t-0 border-black bg-white text-black",
          !tab.active && !tab.last && "after:absolute after:right-0 after:top-1 after:h-[13px] after:w-px after:bg-[#808080]"
        )}
      >
        {tab.name}
      </a>
    ))}
    <span className="ml-auto flex items-center gap-3 pr-2">
      <button type="button" aria-label="Назад">
        <Icon w={5} h={8}>
          <path d="M4 1v6L1 4z" fill="#909090" />
        </Icon>
      </button>
      <button type="button" aria-label="Вперёд">
        <Icon w={5} h={8}>
          <path d="M1 0v8l4-4z" fill="#000" />
        </Icon>
      </button>
    </span>
  </nav>
);

const StatusBar = () => (
  <footer className="flex h-[22px] items-center border-t border-white text-xs text-black">
    <span className="flex-1 pl-[3px]">Для вызова справки нажмите F1</span>
    <span className="flex h-[18px] w-[114px] items-center border-l border-[#a0a0a0] pl-[3px]">Market Overview</span>
    <span className="h-[18px] w-[102px] border-l border-[#a0a0a0]" />
    <span className="h-[18px] w-[70px] border-l border-[#a0a0a0]" />
    <span className="h-[18px] w-[70px] border-l border-[#a0a0a0]" />
    <span className="h-[18px] w-[70px] border-l border-[#a0a0a0]" />
    <span className="h-[18px] w-[70px] border-l border-[#a0a0a0]" />
    <span className="h-[18px] w-[66px] border-l border-[#a0a0a0]" />
    <span className="flex h-[18px] w-[129px] items-center gap-1 border-l border-[#a0a0a0] pl-[5px]">
      <Icon w={24} h={13}>
        {[0, 1, 2, 3, 4, 5, 6, 7].map((i) => (
          <React.Fragment key={i}>
            <rect x={i * 3} y="0" width="2" height={9 - i} fill="#5c7a0c" />
            <rect x={i * 3} y={10 - i} width="2" height={3 + i} fill="#0c3c64" />
          </React.Fragment>
        ))}
      </Icon>
      5367/12 kb
    </span>
  </footer>
);

export default function App() {
  return (
    <div className={clsx("flex min-h-screen w-full flex-col overflow-hidden bg-[#f0f0f0] text-black", UI)}>
      <TitleBar />
      <MenuBar />
      <Toolbar />
      <div className="flex flex-1">
        <DrawingBar />
        <div className="flex min-w-0 flex-1 pr-0.5">
          <Chart />
        </div>
      </div>
      <TabBar />
      <StatusBar />
    </div>
  );
}
